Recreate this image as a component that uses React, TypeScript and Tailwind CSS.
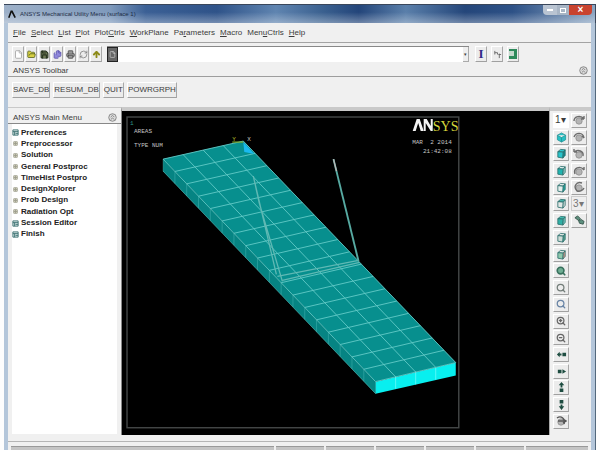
import type { ReactNode } from "react";
import {
  File,
  FolderOpen,
  Save,
  Printer,
  Files,
  RefreshCw,
  ArrowUp,
  Search,
  ZoomIn,
  ZoomOut,
} from "lucide-react";

const menus = [
  ["", "F", "ile"],
  ["", "S", "elect"],
  ["", "L", "ist"],
  ["", "P", "lot"],
  ["Plot", "C", "trls"],
  ["", "W", "orkPlane"],
  ["Pa", "r", "ameters"],
  ["", "M", "acro"],
  ["Men", "u", "Ctrls"],
  ["", "H", "elp"],
];

const tree = [
  { label: "Preferences", leaf: true },
  { label: "Preprocessor" },
  { label: "Solution" },
  { label: "General Postproc" },
  { label: "TimeHist Postpro" },
  { label: "DesignXplorer" },
  { label: "Prob Design" },
  { label: "Radiation Opt" },
  { label: "Session Editor", leaf: true },
  { label: "Finish", leaf: true },
];

const raised =
  "flex shrink-0 items-center justify-center border border-t-white border-l-white border-r-[#a8a8a8] border-b-[#a0a0a0] bg-[#ececec]";

function IconButton({ label, children }: { label: string; children: ReactNode }) {
  return (
    <button type="button" aria-label={label} className={`${raised} h-4 w-3`}>
      {children}
    </button>
  );
}

function ViewButton({ label, children }: { label: string; children: ReactNode }) {
  return (
    <button type="button" aria-label={label} className={`${raised} h-[15px] w-4`}>
      {children}
    </button>
  );
}

function Cube({ top, front, side }: { top: string; front: string; side: string }) {
  return (
    <svg viewBox="0 0 12 12" className="h-[11px] w-[11px]" stroke="#2c6f6c" strokeWidth="0.9" strokeLinejoin="round">
      <path d="M2 4 5 1.5 10 2 8 4.5Z" fill={top} />
      <path d="M2 4 8 4.5 7.5 11 2 10Z" fill={front} />
      <path d="M8 4.5 10 2 10 8 7.5 11Z" fill={side} />
    </svg>
  );
}

// small grey ball with a curved arrow swept over it
function Spin({ arrow, color = "#6c6c6c" }: { arrow: string; color?: string }) {
  return (
    <svg viewBox="0 0 12 12" className="h-3 w-3" fill="none" stroke={color} strokeWidth="1.4">
      <circle cx="6" cy="7" r="3.2" fill="#b4b4b4" stroke="#8d8d8d" strokeWidth="0.8" />
      <path d={arrow} />
    </svg>
  );
}

function Dots({ path }: { path: string }) {
  return (
    <svg viewBox="0 0 12 12" className="h-[11px] w-[11px]" fill="#1d4c40">
      <path d={path} />
    </svg>
  );
}

function Collapse() {
  return (
    <button type="button" aria-label="Collapse" className="h-[9px] w-[9px]">
      <svg viewBox="0 0 10 10" fill="none" stroke="#777" strokeWidth="0.9">
        <circle cx="5" cy="5" r="4.2" fill="#ddd" />
        <path d="M3 4.6 5 2.6 7 4.6M3 7.4 5 5.4 7 7.4" />
      </svg>
    </button>
  );
}

const cubes = [
  { label: "Oblique View", top: "#2ec8d0", front: "#28c3cb", side: "#138b90" },
  { label: "Front View", top: "#dff0ee", front: "#20b4b0", side: "#9fd0cb" },
  { label: "Right View", top: "#e4eeec", front: "#e4eeec", side: "#22aaa2" },
  { label: "Top View", top: "#44b4aa", front: "#e2e8e6", side: "#dbe3e0" },
  { label: "Back View", top: "#44c0b4", front: "#30b0a6", side: "#78cfc6" },
  { label: "Left View", top: "#e1e8e4", front: "#cfdcd7", side: "#58a592" },
  { label: "Bottom View", top: "#dde6e2", front: "#8fc9ad", side: "#da9a8c" },
];

const pans = [
  { label: "Pan Left", path: "M1 6 4 3V5H6V7H4V9ZM7 4h4v4H7Z" },
  { label: "Pan Right", path: "M2 4h4v4H2ZM7 3.500 11 6 7 8.500Z" },
  { label: "Pan Up", path: "M6 0 9 3.500H7V6H5V3.500H3ZM4 7h4v4H4Z" },
  { label: "Pan Down", path: "M4 1h4v4H4ZM5 6H7V8H9L6 12 3 8H5Z" },
];

const spins = [
  { label: "Rotate +X", arrow: "M1 7C1 2 8 1 11 5M11 5 8 5M11 5V2" },
  { label: "Rotate -X", arrow: "M1 6C3 1 10 1 11 7M11 7 9 5" },
  { label: "Rotate +Y", arrow: "M1 4C5 1 11 3 10 8M1 4h3M1 4V1" },
  { label: "Rotate -Y", arrow: "M2 9C0 3 7 0 11 5M11 5V2" },
  { label: "Rotate +Z", arrow: "M9 2C3 0 0 6 4 10C7 11 10 9 11 7" },
];

// plate corners, listed around the top face
const A = [41, 48];
const B = [121, 30];
const C = [333, 251];
const D = [253, 270];
const ROWS = 18;
const COLS = 4;

function mix(p: number[], q: number[], t: number) {
  return [p[0] + (q[0] - p[0]) * t, p[1] + (q[1] - p[1]) * t];
}

function Plot() {
  const rows = Array.from({ length: ROWS + 1 }, (_, i) => [mix(A, D, i / ROWS), mix(B, C, i / ROWS)]);
  const cols = Array.from({ length: COLS + 1 }, (_, i) => [mix(A, B, i / COLS), mix(D, C, i / COLS)]);

  return (
    <svg viewBox="0 0 426 323" className="block w-full" role="img" aria-label="Finite element mesh">
      <rect x="5" y="6" width="331" height="310" fill="none" stroke="#454848" strokeWidth="1.4" />
      <path d="M41 48 253 270V282L41 60Z" fill="#068483" />
      <path d="M253 270 333 251V264L253 282Z" fill="#08efef" />
      <path d="M41 48 121 30 333 251 253 270Z" fill="#078f8e" />
      <g stroke="#62c9c6" strokeWidth="0.9">
        {rows.map(([p, q], i) => (
          <path key={i} d={`M${p[0]} ${p[1]} ${q[0]} ${q[1]}`} />
        ))}
        {cols.map(([p, q], i) => (
          <path key={i} d={`M${p[0]} ${p[1]} ${q[0]} ${q[1]}`} />
        ))}
        {rows.map(([p], i) => (
          <path key={i} d={`M${p[0]} ${p[1]}v12`} strokeOpacity="0.4" />
        ))}
        <path d="M41 60 253 282" strokeOpacity="0.6" />
        <path d="M273 265v12M293 260v13M313 256v12" stroke="#9ff" strokeOpacity="0.6" />
      </g>
      <path d="M121 31 132 43 122 41Z" fill="#1ab9ef" />
      <g fill="none" stroke="#5fb9b4" strokeWidth="1.3">
        <path d="M131 65 154 163M131 65 137 92 160 170" />
        <path d="M155 165 236 149M160 169 237 151" />
        <path d="M211 48 236 150" stroke="#57aaa2" strokeWidth="1.9" />
        <path d="M211 48 214 60" stroke="#bdb4b4" />
      </g>
      <path d="M110 31h11" stroke="#7ba82b" strokeWidth="1.2" />
      <g fontFamily="Liberation Mono, monospace" fontSize="6" fill="#c4c4c4">
        <text x="8" y="14" fill="#2f9b88">1</text>
        <text x="12" y="22">AREAS</text>
        <text x="12" y="36">TYPE NUM</text>
        <text x="110" y="30" fill="#b5bb28">Y</text>
        <text x="125" y="30">X</text>
        <text x="329" y="33" textAnchor="end" xmlSpace="preserve">MAR  2 2014</text>
        <text x="329" y="42" textAnchor="end">21:42:08</text>
      </g>
      <g fill="#f4f4f4">
        <path d="M290 20 294 8H297L301 20H298L295.500 12 293 20Z" />
        <path d="M301 8H304L308 15V8H310V20H308L303 12V20H301Z" />
      </g>
      <text x="310" y="20" fontFamily="Liberation Serif, serif" fontSize="14" fill="#d5d63c">SYS</text>
    </svg>
  );
}

export default function App() {
  return (
    <div className="flex h-screen flex-col overflow-hidden bg-[#fdfdfd] px-1 pt-1 font-['Liberation_Sans',sans-serif] text-[8px] leading-3 text-[#3c3c3c]">
      <header className="flex h-[19px] shrink-0 items-center gap-1 border-t border-r border-[#39465a] bg-[linear-gradient(to_bottom,transparent_40%,#ffffff55),linear-gradient(to_right,#9db0c8,#7f9abc_18%,#3b6095_24%,#2f5389_36%,#5f84b0_46%,#3a608f_54%,#23457a_60%,#5a7faa_68%,#24467a_78%,#2d5186_86%,#8ba5c2)] pl-1">
        <svg viewBox="0 0 10 10" className="h-[9px] w-2" fill="none" stroke="#111" strokeWidth="2">
          <path d="M1 9 4 1h1l4 8" />
        </svg>
        <h1 className="text-[6px] text-[#1c2c44]">ANSYS Mechanical Utility Menu (surface 1)</h1>
        <div className="ml-auto flex self-start pr-[3px]">
          <button type="button" aria-label="Minimize" className="flex h-[10px] w-[14px] items-center justify-center rounded-bl-sm bg-[#b9c4d2]">
            <span className="h-[2px] w-[6px] bg-white" />
          </button>
          <button type="button" aria-label="Maximize" className="flex h-[10px] w-3 items-center justify-center bg-[#a8b5c5]">
            <span className="h-[5px] w-[6px] border border-white" />
          </button>
          <button type="button" aria-label="Close" className="flex h-[10px] w-[23px] items-center justify-center rounded-br-sm bg-[#c9432f] text-[10px] leading-none font-bold text-white">
            ×
          </button>
        </div>
      </header>

      <div className="flex min-h-0 grow flex-col border-r border-[#53687c] bg-[#b4c6da] px-1">
        <div className="flex min-h-0 grow flex-col bg-[#f0f0f0]">
          <nav className="flex h-5 shrink-0 items-center gap-[5px] border-b border-[#a3a3a3] pl-[5px]">
            {menus.map(([pre, key, post]) => (
              <button type="button" key={pre + key + post}>
                {pre}
                <u>{key}</u>
                {post}
              </button>
            ))}
          </nav>

          <div className="flex h-[22px] shrink-0 items-center pl-1">
            <div className="flex gap-px pr-[5px]">
              <IconButton label="New">
                <File size={9} color="#999" fill="#fff" />
              </IconButton>
              <IconButton label="Open">
                <FolderOpen size={9} color="#4c5a14" fill="#d7cf45" />
              </IconButton>
              <IconButton label="Save">
                <Save size={9} color="#27331f" fill="#6e7a55" strokeWidth={3} />
              </IconButton>
              <IconButton label="Pan">
                <Files size={9} color="#5a51a8" fill="#9189dd" />
              </IconButton>
              <IconButton label="Print">
                <Printer size={9} color="#444" fill="#999" />
              </IconButton>
              <IconButton label="Report">
                <RefreshCw size={9} color="#777" />
              </IconButton>
              <IconButton label="Help">
                <ArrowUp size={9} color="#8c8a18" strokeWidth={5} />
              </IconButton>
            </div>
            <div className="flex h-4 w-[362px] shrink border-t border-[#888] bg-white">
              <button type="button" aria-label="Command history" className="flex w-[11px] items-center justify-center border border-[#222] bg-[#666]">
                <File size={7} color="#ddd" />
              </button>
              <input aria-label="Command" className="min-w-0 grow px-1 outline-none" />
              <button type="button" aria-label="Show commands" className="w-[6px] border-r border-b border-[#aaa] bg-[#eee] text-[5px] leading-none">
                ▾
              </button>
            </div>
            <div className="flex gap-1 pl-[6px]">
              <IconButton label="Hidden dialogs">
                <span className="font-['Liberation_Serif',serif] text-[13px] font-bold text-[#302c88]">I</span>
              </IconButton>
              <IconButton label="Reset picking">
                <svg viewBox="0 0 10 10" className="w-[9px]" fill="none" stroke="#666">
                  <path d="M2 1v4M2 3h3v2M7 4v5M6 5h3" />
                </svg>
              </IconButton>
              <IconButton label="Contact manager">
                <svg viewBox="0 0 10 10" className="w-[10px]">
                  <path d="M1 0h8v10H1Z" fill="#2e8a5b" />
                  <path d="M1 2h5v5H1Z" fill="#c5d9cd" />
                </svg>
              </IconButton>
            </div>
          </div>

          <div className="flex h-3 shrink-0 items-center justify-between border-b border-[#9d9d9d] pr-[3px] pl-[5px]">
            <h2>ANSYS Toolbar</h2>
            <Collapse />
          </div>
          <div className="flex h-[30px] shrink-0 items-center gap-[3px] pb-1 pl-1">
            {["SAVE_DB", "RESUM_DB", "QUIT", "POWRGRPH"].map((name) => (
              <button type="button" key={name} className={`${raised} h-4`}>
                {name}
              </button>
            ))}
          </div>

          <main className="flex shrink-0">
            <aside className="flex w-[113px] shrink-0 flex-col border-t border-[#c9c9c9] pb-px">
              <div className="flex h-4 items-center justify-between border-b border-[#888] pt-1 pr-1 pl-[5px]">
                <h2>ANSYS Main Menu</h2>
                <Collapse />
              </div>
              <div className="mx-1 grow bg-white pt-[3px]">
                <ul className="grid h-[113px] grid-rows-10 items-center font-bold text-[#222]">
                  {tree.map(({ label, leaf }) => (
                    <li key={label} className="flex items-center gap-[2px]">
                      {leaf ? (
                        <svg viewBox="0 0 8 8" className="h-[7px] w-[7px]" fill="#d7e5e5" stroke="#356b6b">
                          <path d="M1 1h6v6H1ZM1 3h6M3 3v4M4 5h3" />
                        </svg>
                      ) : (
                        <svg viewBox="0 0 8 8" className="h-[7px] w-[7px]" fill="#e6e6cf" stroke="#9b9b8c">
                          <path d="M2 2h4v4H2ZM2 4h4M4 2v4" />
                        </svg>
                      )}
                      <a href="#">{label}</a>
                    </li>
                  ))}
                </ul>
              </div>
            </aside>

            <section className="min-w-0 grow border-t-4 border-l border-t-[#c9c9c9] border-l-[#888] bg-black">
              <Plot />
            </section>

            <aside className="w-[42px] shrink-0 border-t-4 border-l border-t-[#c9c9c9] border-l-[#aaa] pt-px pb-[5px] pl-[3px]">
              <div className="grid h-full grid-flow-col grid-cols-[16px_16px] grid-rows-19 items-center gap-x-[2px]">
                <select aria-label="Window number" className="h-[15px] w-4 appearance-none bg-white pl-[2px] text-[10px] leading-none">
                  <option>1▾</option>
                </select>
                <ViewButton label="Isometric View">
                  <svg viewBox="0 0 12 12" className="h-[11px] w-[11px]" fill="#27c0c4" stroke="#1f8f92" strokeWidth="0.8">
                    <path d="M6 1 10.500 3.500V8.500L6 11 1.500 8.500V3.500ZM1.500 3.500 6 6 10.500 3.500M6 6V11" />
                  </svg>
                </ViewButton>
                {cubes.map(({ label, ...faces }) => (
                  <ViewButton key={label} label={label}>
                    <Cube {...faces} />
                  </ViewButton>
                ))}
                <ViewButton label="Fit View">
                  <Search size={10} color="#38705d" fill="#6fae93" strokeWidth={4} />
                </ViewButton>
                <ViewButton label="Zoom Window">
                  <Search size={10} color="#737d79" strokeWidth={3} />
                </ViewButton>
                <ViewButton label="Back Up">
                  <Search size={10} color="#6884a5" strokeWidth={3} />
                </ViewButton>
                <ViewButton label="Zoom In">
                  <ZoomIn size={10} color="#666" strokeWidth={3} />
                </ViewButton>
                <ViewButton label="Zoom Out">
                  <ZoomOut size={10} color="#666" strokeWidth={3} />
                </ViewButton>
                {pans.map(({ label, path }) => (
                  <ViewButton key={label} label={label}>
                    <Dots path={path} />
                  </ViewButton>
                ))}
                <ViewButton label="Pan Zoom Rotate">
                  <Spin arrow="M2 3C6 0 11 4 9 9M3 6h8M8 4 11 6 8 8" color="#555" />
                </ViewButton>
                {spins.map(({ label, arrow }) => (
                  <ViewButton key={label} label={label}>
                    <Spin arrow={arrow} />
                  </ViewButton>
                ))}
                <select aria-label="Rotation rate" className="h-[15px] w-4 appearance-none border border-[#ccc] bg-[#eee] pl-px text-[10px] leading-none text-[#777]">
                  <option>3▾</option>
                </select>
                <ViewButton label="Dynamic mode">
                  <svg viewBox="0 0 12 12" className="h-[11px] w-[11px]" fill="#5d8f7e" stroke="#39594e">
                    <path d="M1 3 4 1 7 4 5 6ZM5 6 8 5 11 7 10 10 6 9Z" />
                  </svg>
                </ViewButton>
              </div>
            </aside>
          </main>

          <footer className="mt-[6px] flex shrink-0 gap-[2px] border-t border-[#b5b5b5] px-[3px] pt-1">
            <span className="h-3 grow border-t border-[#999] bg-[#c4c4c4]" />
            {[1, 2, 3, 4, 5].map((i) => (
              <span key={i} className="h-3 w-12 border-t border-[#999] bg-[#c4c4c4]" />
            ))}
            <span className="h-3 w-[62px] border-t border-[#999] bg-[#c4c4c4]" />
          </footer>
        </div>
      </div>
    </div>
  );
}
